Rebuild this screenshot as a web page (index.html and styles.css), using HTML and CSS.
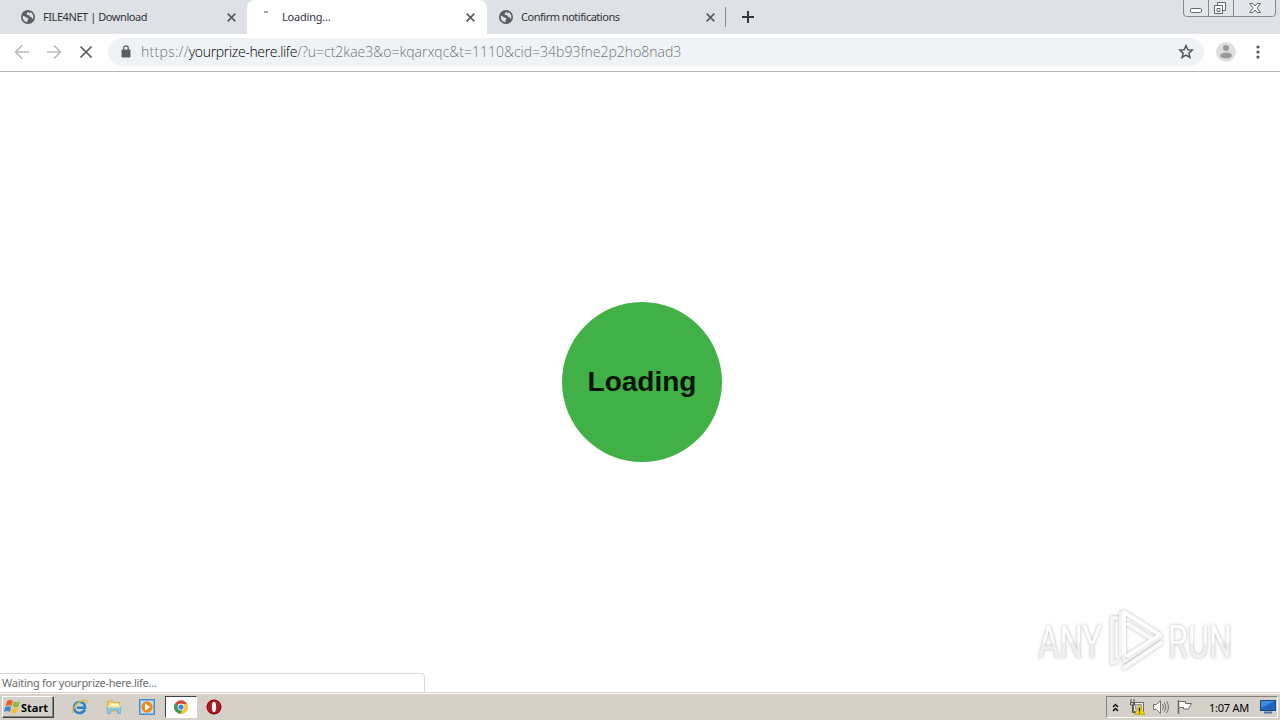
FILE: index.html
```
<!DOCTYPE html>
<html lang="en">
<head>
  <meta charset="UTF-8">
  <meta name="viewport" content="width=device-width, initial-scale=1.0">
  <title>Loading...</title>
  <link rel="stylesheet" href="styles.css">
</head>
<body>
  <svg class="defs" width="0" height="0">
    <symbol id="globe" viewBox="0 0 14 14">
      <circle cx="7" cy="7" r="7" fill="#5a5e63"/>
      <path d="M2 5.5 5 7.2 7.6 8.2 6.6 10 6.4 12.2C3.6 12 1.7 9.8 1.7 7zM7.3 1.7 5.6 3.4 6 5 8.3 5.2 9 6.8 10.6 7.2 11.8 9.2C13 6.600 12 3.600 9.600 2.300L8.600 3.500z" fill="#dee1e6"/>
    </symbol>
    <symbol id="close" viewBox="0 0 9 9">
      <path d="M.7.7l7.600 7.600M8.300.7.7 8.300" stroke="#5a5e63" stroke-width="1.700"/>
    </symbol>
  </svg>

  <!-- tabs -->
  <header class="tabs">
    <div class="tab first">
      <svg class="favicon" width="14" height="14"><use href="#globe"/></svg>
      <span class="title download">FILE4NET | Download</span>
      <svg class="close" width="9" height="9"><use href="#close"/></svg>
    </div>
    <div class="tab active">
      <span class="spinner"></span>
      <span class="title loading">Loading...</span>
      <svg class="close" width="9" height="9"><use href="#close"/></svg>
    </div>
    <div class="tab">
      <svg class="favicon" width="14" height="14"><use href="#globe"/></svg>
      <span class="title confirm">Confirm notifications</span>
      <svg class="close" width="9" height="9"><use href="#close"/></svg>
    </div>
    <span class="divider"></span>
    <svg class="new-tab" width="12" height="12" viewBox="0 0 12 12"><path d="M6 0v12M0 6h12" stroke="#33373c" stroke-width="2"/></svg>
    <svg class="window-buttons" width="94" height="18" viewBox="0 0 94 18">
      <path d="M.5 0v13q0 3.500 3 3.500h86q3 0 3-3.500V0M25.500 0v16M50.500 0v16" fill="#e3e5ea" stroke="#85888e"/>
      <rect x="12.500" y="8.500" width="11" height="4" rx="1" transform="translate(-5)" fill="#fff" stroke="#62666d"/>
      <path d="M34.500 2.500h8v8h-3v3h-8v-8h3z" fill="#fff" stroke="#62666d"/>
      <path d="M34.500 5.500h5v5M34 8.500h3v3h-3z" fill="none" stroke="#62666d"/>
      <path d="M66.500 3.500h3.500l2 2.500 2-2.500h3.500L74 8l3.500 4.500H74L72 10l-2 2.500h-3.500L70 8z" fill="#fff" stroke="#62666d"/>
    </svg>
  </header>

  <!-- toolbar -->
  <nav class="toolbar">
    <svg class="nav-buttons" width="80" height="16" viewBox="0 0 80 16" fill="none" stroke-width="1.700">
      <path d="M15 8H2M8 1.500 1.500 8 8 14.500M33 8h13M40 1.500 46.500 8 40 14.500" stroke="#b9bbbe"/>
      <path d="M66.500 2.500l11 11M77.500 2.500l-11 11" stroke="#53575c"/>
    </svg>
    <div class="address">
      <svg width="10" height="13" viewBox="0 0 10 13"><rect x=".5" y="4.500" width="9" height="8" rx="1" fill="#5a5e63"/><path d="M2.700 5V3.200a2.300 2.300 0 0 1 4.600 0V5" fill="none" stroke="#5a5e63" stroke-width="1.300"/></svg>
      <div class="url"><span class="scheme">https://</span><span class="host">yourprize-here.life</span><span class="query">/?u=ct2kae3&amp;o=kqarxqc&amp;t=1110&amp;cid=34b93fne2p2ho8nad3</span></div>
      <svg class="star" width="16" height="15" viewBox="0 0 16 15"><path d="M8 1.600l1.800 4.100 4.500.4-3.400 3 1 4.400L8 11.200l-3.900 2.300 1-4.400-3.400-3 4.500-.4z" fill="none" stroke="#53575c" stroke-width="1.500"/></svg>
    </div>
    <svg class="avatar" width="20" height="20" viewBox="0 0 20 20"><circle cx="10" cy="10" r="10" fill="#dfdfdf"/><circle cx="10" cy="6" r="3" fill="#9b9b9b"/><ellipse cx="10" cy="13.500" rx="6" ry="3" fill="#9b9b9b"/></svg>
    <svg class="menu" width="4" height="14" viewBox="0 0 4 14" fill="#53575c"><circle cx="2" cy="2" r="1.600"/><circle cx="2" cy="7" r="1.600"/><circle cx="2" cy="12" r="1.600"/></svg>
  </nav>

  <!-- page -->
  <main class="page">
    <div class="circle">Loading</div>
    <div class="status"><span>Waiting for yourprize-here.life...</span></div>
    <svg class="watermark" width="220" height="70" viewBox="0 0 220 70">
      <defs>
        <linearGradient id="fade" x1="0" y1="0" x2="0" y2="1">
          <stop offset="0" stop-color="#fff"/><stop offset=".52" stop-color="#fdfdfd"/><stop offset=".53" stop-color="#efefef"/><stop offset="1" stop-color="#f3f3f3"/>
        </linearGradient>
      </defs>
      <g font-family="Roboto, sans-serif" font-size="46" fill="url(#fade)">
        <text x="8" y="53" textLength="64" lengthAdjust="spacingAndGlyphs">ANY</text>
        <text x="138" y="53" textLength="64" lengthAdjust="spacingAndGlyphs">RUN</text>
      </g>
      <g fill="none" stroke-linejoin="round" stroke-linecap="round">
        <path d="M87 13h-5v45l5-2M91 50V8" stroke="#f4f4f4" stroke-width="4"/>
        <path d="M94 50V7l36 23-33 21" stroke="#fff" stroke-width="4"/>
        <path d="M98 19l24 15M94 63l37-25" stroke="#fbfbfb" stroke-width="4"/>
        <path d="M94 50v7l37-25" stroke="#f1f1f1" stroke-width="3"/>
      </g>
    </svg>
  </main>

  <!-- taskbar -->
  <footer class="taskbar">
    <div class="start">
      <svg width="17" height="16" viewBox="0 0 17 16"><path d="M3 2q3-2 6 0L7.500 7q-3-1.500-6 0z" fill="#e8632d"/><path d="M10 2.500q3 1.500 6 0L14.500 7.500q-3 1.500-6 0z" fill="#87b940"/><path d="M1.200 8q3-1.500 6 0L6 13q-3-2-6 0z" fill="#4386cf"/><path d="M8.200 8.500q3 1.500 6 0L13 13.500q-3 1.500-6 0z" fill="#f5bd32"/></svg>
      <span>Start</span>
    </div>
    <div class="launch">
      <svg width="18" height="16" viewBox="0 0 18 16"><path d="M14 10.500Q12 14 8.500 14C5 14 3 11.500 3 8.500S5.500 3 8.800 3 14 5.500 14 8.800H6" fill="none" stroke="#2884d1" stroke-width="2.600"/><path d="M2 14C-1 12 6 3 12 1.500c4-1 4.500.5 3 3.500" fill="none" stroke="#e5b93b" stroke-width="1.300"/></svg>
    </div>
    <div class="launch">
      <svg width="16" height="16" viewBox="0 0 16 16"><path d="M1.500 2h5l1 1.500h6V12h-12z" fill="#edcf66" stroke="#d4b14d"/><path d="M4 4.500h9v4H4z" fill="#fff8c9"/><path d="M1 7.500h14l-.5 7h-3V11h-7v3.500h-3z" fill="#8bc5e3" stroke="#65a8cc" stroke-width=".7"/><path d="M1.500 6.500h13v2h-13z" fill="#f8e98d"/></svg>
    </div>
    <div class="launch">
      <svg width="16" height="16" viewBox="0 0 16 16"><rect x=".5" y=".5" width="15" height="15" fill="#7eb7e8" stroke="#4b8bc6"/><rect x="2" y="2" width="12" height="12" fill="#c5e0f5"/><circle cx="8" cy="8" r="5.700" fill="#f08a19"/><path d="M6 4.500 11.500 8 6 11.500z" fill="#fff"/></svg>
    </div>
    <div class="launch pressed">
      <svg width="14" height="14" viewBox="0 0 14 14"><circle cx="7" cy="7" r="6.800" fill="#e04436"/><path d="M7 7 1 3.600A6.800 6.800 0 0 0 6.200 13.700L9.800 8.500z" fill="#329d57"/><path d="M7 4h6.100A6.800 6.800 0 0 1 6.200 13.800L9.800 8.300z" fill="#f5c92f"/><circle cx="7" cy="7" r="3.400" fill="#fff"/><circle cx="7" cy="7" r="2.600" fill="#4481e5"/></svg>
    </div>
    <div class="launch">
      <svg width="16" height="16" viewBox="0 0 16 16"><circle cx="8" cy="8" r="7.500" fill="#b51b20"/><circle cx="8" cy="8" r="6.800" fill="none" stroke="#7d1014"/><ellipse cx="8" cy="8" rx="2.100" ry="5.200" fill="#fff"/></svg>
    </div>
    <div class="tray">
      <svg class="chevrons" width="7" height="9" viewBox="0 0 7 9"><path d="M1 4l2.500-2.500L6 4M1 8l2.500-2.500L6 8" fill="none" stroke="#000" stroke-width="1.400"/></svg>
      <svg class="network" width="16" height="16" viewBox="0 0 16 16"><path d="M4.500 3.500h10v9h-10z" fill="#f3f1ea" stroke="#6b6963"/><path d="M6.500 5.500h6v5h-6z" fill="#cbc8c0" stroke="#99968f"/><path d="M1 3.500h5M1.500 3v3h4V3M3.500 6v7.500h4" fill="none" stroke="#55534e"/><path d="M2 0v3M5 0v3" stroke="#55534e"/><path d="M10.500 6 16 15.500H5.500z" fill="#f4d500" stroke="#a49000" stroke-width=".5"/><path d="M10.500 9v3.500M10.500 13.500v1" stroke="#111" stroke-width="1.300"/></svg>
      <svg class="sound" width="17" height="14" viewBox="0 0 17 14" fill="none" stroke="#77746f"><path d="M1.500 4.500h3l4-4v13l-4-4h-3z" fill="#fff"/><path d="M10.500 4q2 3 0 6M12.500 2.500q3 4.500 0 9M14.500 1q4 6 0 12"/></svg>
      <svg class="flag" width="16" height="14" viewBox="0 0 16 14"><path d="M2.500 1.500h6v2h6l-3 5.500h-5v-1.500h-4" fill="#fff" stroke="#6d6a65"/><path d="M1.500 0v14" stroke="#6d6a65" stroke-width="1.500"/></svg>
      <span class="clock">1:07 AM</span>
      <svg class="desktop" width="16" height="14" viewBox="0 0 16 14"><rect x=".5" y=".5" width="15" height="10" fill="#2366bd" stroke="#194782"/><path d="M1 1h14L1 8z" fill="#3f8bdd"/><path d="M4 12.500h8" stroke="#4377ae" stroke-width="2"/></svg>
    </div>
  </footer>
</body>
</html>
```

FILE: styles.css
```
* {
  box-sizing: border-box;
}
body {
  margin: 0;
  width: 1280px;
  height: 720px;
  display: flex;
  flex-direction: column;
  overflow: hidden;
  background-color: #fff;
  font-family: "Noto Sans", sans-serif;
  font-size: 11px;
  color: #30343a;
}
svg {
  display: block;
  flex: none;
}
.defs {
  position: absolute;
}
.tabs {
  height: 34px;
  display: flex;
  align-items: center;
  background-color: #dee1e6;
}
.tab {
  width: 239px;
  height: 34px;
  display: flex;
  align-items: center;
  padding: 0 11px 0 12px;
}
.tab.first {
  width: 247px;
  padding-left: 21px;
}
.tab.active {
  width: 240px;
  padding-right: 12px;
  background-color: #fff;
  border-radius: 8px 8px 0 0;
}
.title {
  margin-left: 8px;
  padding-bottom: 2px;
  white-space: nowrap;
}
.title.download {
  letter-spacing: -0.43px;
}
.title.confirm {
  letter-spacing: -0.48px;
}
.title.loading {
  margin-left: 14px;
  letter-spacing: -0.2px;
}
.close {
  margin-left: auto;
}
.spinner {
  width: 4px;
  height: 2px;
  margin: -11px 0 0 5px;
  background-color: #a0a2a5;
}
.divider {
  width: 1px;
  height: 20px;
  margin-left: -1px;
  background-color: #8b8f94;
}
.new-tab {
  margin-left: 16px;
}
.window-buttons {
  margin-left: auto;
  margin-right: 3px;
  align-self: flex-start;
}
.toolbar {
  height: 38px;
  display: flex;
  align-items: center;
  padding: 0 0 2px 14px;
  border-bottom: 1px solid #b5b5b5;
}
.address {
  width: 1096px;
  height: 28px;
  margin-left: 14px;
  padding: 0 10px 0 13px;
  display: flex;
  align-items: center;
  border-radius: 14px;
  background-color: #f0f3f6;
}
.url {
  margin-left: 10px;
  font-family: "Open Sans", sans-serif;
  font-weight: 300;
  font-size: 14px;
  white-space: nowrap;
  color: #6f7378;
}
.scheme {
  letter-spacing: 0.3px;
}
.host {
  color: #000;
  letter-spacing: -0.33px;
}
.star {
  margin-left: auto;
}
.avatar {
  margin-left: 12px;
}
.menu {
  margin-left: 20px;
}
.page {
  position: relative;
  height: 620px;
  display: flex;
  justify-content: center;
  align-items: center;
  padding-left: 4px;
}
.circle {
  width: 160px;
  height: 160px;
  border-radius: 50%;
  background-color: #41b147;
  color: #071407;
  font: bold 28px/160px "Liberation Sans", Arial, sans-serif;
  text-align: center;
}
/* link status bubble over the page */
.status {
  position: absolute;
  left: 0;
  bottom: 0;
  width: 425px;
  height: 19px;
  padding-left: 2px;
  border: 1px solid #dadada;
  border-left: 0;
  border-bottom: 0;
  border-top-right-radius: 4px;
  background-color: #fff;
  line-height: 18px;
  letter-spacing: -0.27px;
  color: #6b6b6b;
}
.watermark {
  position: absolute;
  right: 30px;
  bottom: 17px;
  filter: drop-shadow(0 0 1.5px #b5b5b5);
}
.taskbar {
  height: 28px;
  display: flex;
  align-items: center;
  padding: 1px 2px 0;
  background-color: #d5d1c9;
  border-top: 1px solid #d5d1c9;
  box-shadow: inset 0 1px #fff;
}
.start {
  width: 52px;
  height: 22px;
  margin-right: 10px;
  display: flex;
  align-items: center;
  padding-left: 1px;
  border: 1px solid;
  border-color: #fff #404040 #404040 #fff;
  box-shadow: inset -1px -1px #85817b;
  font-weight: bold;
  color: #000;
}
.launch {
  width: 32px;
  height: 22px;
  margin-right: 1.5px;
  display: flex;
  justify-content: center;
  align-items: center;
}
.launch.pressed {
  background-color: #fff;
  border: 1px solid;
  border-color: #404040 #fff #fff #404040;
}
.tray {
  width: 172px;
  height: 22px;
  margin-left: auto;
  display: flex;
  align-items: center;
  padding-left: 5px;
  border: 1px solid;
  border-color: #85817b #fff #fff #85817b;
  color: #000;
}
.network {
  margin-left: 10px;
}
.sound {
  margin-left: 7px;
}
.flag {
  margin-left: 8px;
}
.clock {
  margin-left: 16px;
  letter-spacing: -0.25px;
  white-space: nowrap;
}
.desktop {
  margin-left: auto;
  margin-right: 1px;
}
```
